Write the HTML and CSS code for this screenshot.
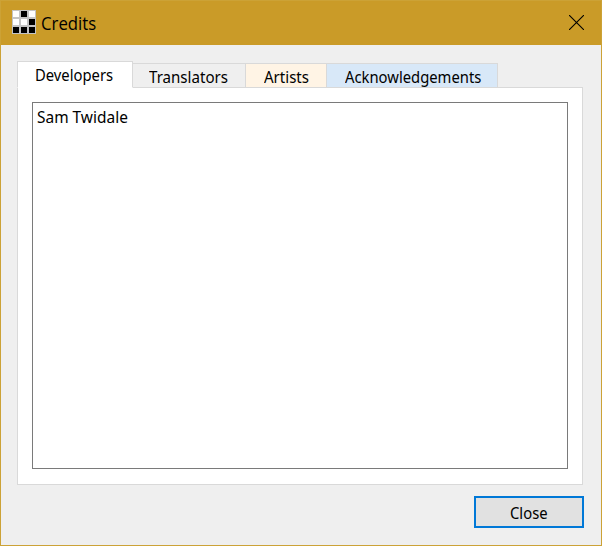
FILE: index.html
```html
<!DOCTYPE html>
<html lang="en">
<head>
<meta charset="utf-8">
<title>Credits</title>
<link rel="stylesheet" href="styles.css">
</head>
<body>
<div class="window">
  <header class="titlebar">
    <svg class="logo" width="24" height="24" viewBox="0 0 24 24">
      <path fill="#c4c4c4" d="M0 0h24v24H0z"/>
      <path fill="#fff" d="M1 1h6v6H1zM17 1h6v6h-6zM1 9h6v6H1zM9 9h6v6H9z"/>
      <path fill="#000" d="M9 1h6v6H9zM17 9h6v6h-6zM1 17h6v6H1zM9 17h6v6H9zM17 17h6v6h-6z"/>
    </svg>
    <h1 class="title"><span>Credits</span></h1>
    <svg class="dismiss" width="15" height="15" viewBox="0 0 15 15"><path d="M0 0l15 15M15 0L0 15" stroke="#000" stroke-width="1.1"/></svg>
  </header>
  <main class="content">
    <nav class="tabs">
      <div class="tab selected"><span>Developers</span></div>
      <div class="tab translators"><span>Translators</span></div>
      <div class="tab artists"><span>Artists</span></div>
      <div class="tab acknowledgements"><span>Acknowledgements</span></div>
    </nav>
    <section class="pane"><div class="names"><span>Sam Twidale</span></div></section>
    <footer class="actions"><button class="close"><span>Close</span></button></footer>
  </main>
</div>
</body>
</html>
```
FILE: styles.css
```css
* { box-sizing: border-box; }
body { margin: 0; font: 16px/20px "Noto Sans", sans-serif; color: #000; }
span { display: inline-block; white-space: nowrap; transform-origin: 0 50%; transform: scaleX(.925); }
.window { width: 602px; height: 546px; border: 1px solid #cca236; background: #efefef; }
.titlebar { height: 44px; display: flex; align-items: flex-start; padding: 9px 17px 0 11px; background: #ca9b28; }
.title { margin: 3px 0 0 5px; font: 18px/20px "Open Sans", sans-serif; flex: 1; }
.title span { transform: scaleX(.93); }
.dismiss { margin-top: 5px; }
.content { padding: 16px 17px 0 16px; }
.tabs { display: flex; align-items: flex-end; height: 27px; background: linear-gradient(#d9d9d9, #d9d9d9) 0 100% / 566px 1px no-repeat; }
.tab { height: 25px; border: 1px solid #d9d9d9; border-left: 0; padding: 3px 0 0 16px; background: #efefef; }
.selected { height: 27px; width: 116px; border-left: 1px solid #d9d9d9; border-bottom-color: #fff; padding-left: 17px; background: #fff; }
.translators { width: 113px; }
.translators span { transform: scaleX(.943); }
.artists { width: 81px; padding-left: 18px; background: #fff4e5; }
.artists span { transform: scaleX(.94); }
.acknowledgements { width: 171px; padding-left: 18px; background: #d8e8f8; }
.pane { width: 566px; height: 397px; border: 1px solid #d9d9d9; border-top: 0; padding: 14px; background: #fff; }
.names { width: 536px; height: 367px; border: 1px solid #7a7a7a; padding: 4px; }
.names span { transform: scaleX(.965); }
.actions { display: flex; justify-content: flex-end; margin-top: 11px; }
.close { width: 110px; height: 32px; border: 2px solid #0078d7; background: #e1e1e1; padding: 2px 0 0 34px; text-align: left; font: inherit; color: #000; }
```
